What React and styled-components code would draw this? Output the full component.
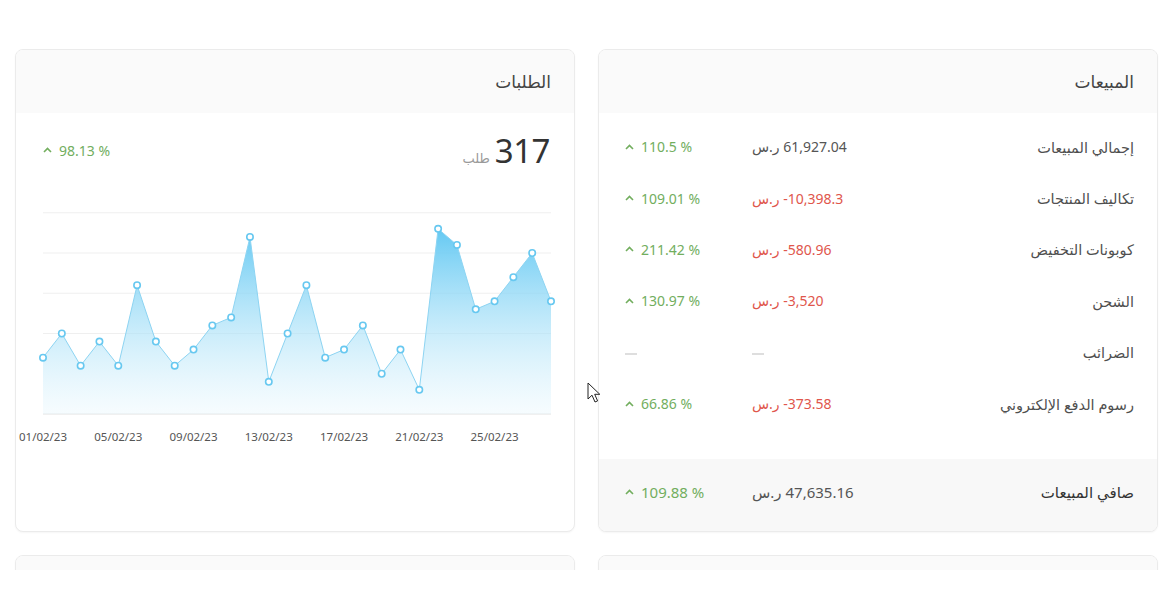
import React from "react";
import styled, { createGlobalStyle } from "styled-components";

const GlobalStyle = createGlobalStyle`
  html, body {
    margin: 0;
    padding: 0;
    background: #ffffff;
  }
  body {
    font-family: "Noto Sans", "DejaVu Sans", sans-serif;
    color: #444;
  }
`;

const GREEN = "#72ae5e";
const RED = "#e0564c";

const Page = styled.div`
  position: relative;
  direction: rtl;
  height: 570px;
  overflow: hidden;
  box-sizing: border-box;
  padding: 49px 12px 0 15px;
  display: grid;
  grid-template-columns: 560px 560px;
  grid-auto-rows: 483px;
  column-gap: 23px;
  row-gap: 23px;
`;

const Card = styled.section`
  display: flex;
  flex-direction: column;
  border: 1px solid #ebebeb;
  border-radius: 8px;
  background: #fff;
  overflow: hidden;
  box-shadow: 0 1px 2px rgba(0, 0, 0, 0.04);
`;

const CardHeader = styled.header`
  height: 63px;
  flex: none;
  display: flex;
  align-items: center;
  padding: 0 23px;
  background: #fafafa;
  font-size: 17px;
  color: #444;
`;

const SalesBody = styled.div`
  flex: 1;
  padding: 8px 23px 30px 26px;
  display: flex;
  flex-direction: column;
`;

const Row = styled.div`
  display: grid;
  grid-template-columns: 1fr 200px 127px;
  align-items: center;
  height: 51.4px;
  font-size: ${(p) => (p.$big ? 15 : 14)}px;
`;

const Label = styled.div`
  font-size: ${(p) => (p.$strong ? 15 : 14.5)}px;
  color: ${(p) => (p.$strong ? "#333" : "#4f4f4f")};
  font-weight: ${(p) => (p.$strong ? 500 : 400)};
`;

const Value = styled.div`
  text-align: left;
  color: ${(p) => (p.$negative ? RED : "#555")};
`;

const Num = styled.span`
  unicode-bidi: isolate;
`;

const Dash = styled.span`
  display: inline-block;
  width: 12px;
  height: 2px;
  background: #dedede;
  vertical-align: middle;
`;

const Change = styled.div`
  direction: ltr;
  display: flex;
  align-items: center;
  gap: 7px;
  color: ${GREEN};
  font-size: ${(p) => p.$size || 14}px;
`;

const SalesFooter = styled.div`
  height: 74px;
  flex: none;
  box-sizing: border-box;
  background: #f8f8f8;
  padding: 0 23px 9px 26px;
  display: flex;
  align-items: center;
  & > div {
    flex: 1;
  }
`;

const OrdersBody = styled.div`
  flex: 1;
  display: flex;
  flex-direction: column;
  padding-top: 17px;
`;

const TotalRow = styled.div`
  height: 40px;
  display: flex;
  align-items: center;
  justify-content: space-between;
  padding: 0 24px 0 27px;
`;

const Total = styled.div`
  display: flex;
  align-items: baseline;
  gap: 5px;
`;

const TotalNumber = styled.span`
  font-size: 33px;
  line-height: 1;
  color: #333;
  font-weight: 400;
  letter-spacing: -0.5px;
`;

const TotalUnit = styled.span`
  font-size: 13px;
  color: #9a9a9a;
`;

const ChartSvg = styled.svg`
  display: block;
  margin-top: 24px;
  direction: ltr;
`;

const AxisLabel = styled.text`
  font-family: "Noto Sans", "DejaVu Sans", sans-serif;
  font-size: 11.5px;
  fill: #555;
`;

const Cursor = styled.svg`
  position: absolute;
  left: 587px;
  top: 382px;
`;

function Chevron() {
  return (
    <svg width="9" height="6" viewBox="0 0 9 6">
      <path d="M1 5 L4.5 1.5 L8 5" fill="none" stroke={GREEN} strokeWidth="1.6" />
    </svg>
  );
}

const rows = [
  { label: "إجمالي المبيعات", value: "61,927.04", change: "110.5 %" },
  { label: "تكاليف المنتجات", value: "-10,398.3", change: "109.01 %", negative: true },
  { label: "كوبونات التخفيض", value: "-580.96", change: "211.42 %", negative: true },
  { label: "الشحن", value: "-3,520", change: "130.97 %", negative: true },
  { label: "الضرائب", empty: true },
  { label: "رسوم الدفع الإلكتروني", value: "-373.58", change: "66.86 %", negative: true },
];

const values = [7, 10, 6, 9, 6, 16, 9, 6, 8, 11, 12, 22, 4, 10, 16, 7, 8, 11, 5, 8, 3, 23, 21, 13, 14, 17, 20, 14];

function OrdersChart() {
  const x0 = 27;
  const step = (535 - 27) / 27;
  const base = 220;
  const unit = 8.05;
  const pts = values.map((v, i) => [x0 + i * step, base - v * unit]);
  const line = pts.map((p, i) => (i ? "L" : "M") + p[0].toFixed(1) + " " + p[1].toFixed(1)).join(" ");
  const area = line + ` L535 ${base} L${x0} ${base} Z`;
  const grid = [0, 10, 15, 20, 25];
  return (
    <ChartSvg width="558" height="262" viewBox="0 0 558 262">
      <defs>
        <linearGradient id="fillBlue" x1="0" y1="0" x2="0" y2="1">
          <stop offset="0%" stopColor="#5cc6f2" stopOpacity="0.95" />
          <stop offset="100%" stopColor="#e6f6fd" stopOpacity="0.35" />
        </linearGradient>
      </defs>
      {grid.map((g) => (
        <line
          key={g}
          x1="27"
          x2="535"
          y1={base - g * unit}
          y2={base - g * unit}
          stroke={g === 0 ? "#e2e2e2" : "#efefef"}
          strokeWidth="1"
        />
      ))}
      <path d={area} fill="url(#fillBlue)" />
      <path d={line} fill="none" stroke="#8dd4f2" strokeWidth="1" />
      {pts.map((p, i) => (
        <circle key={i} cx={p[0]} cy={p[1]} r="3.2" fill="#fff" stroke="#67c8f0" strokeWidth="1.6" />
      ))}
      {pts.map((p, i) =>
        i % 4 === 0 ? (
          <AxisLabel key={"l" + i} x={p[0]} y="247" textAnchor="middle">
            {String(i + 1).padStart(2, "0")}/02/23
          </AxisLabel>
        ) : null
      )}
    </ChartSvg>
  );
}

function SalesCard() {
  return (
    <Card>
      <CardHeader>المبيعات</CardHeader>
      <SalesBody>
        {rows.map((r) => (
          <Row key={r.label}>
            <Label>{r.label}</Label>
            {r.empty ? (
              <>
                <Value>
                  <Dash />
                </Value>
                <Value>
                  <Dash />
                </Value>
              </>
            ) : (
              <>
                <Value $negative={r.negative}>
                  <Num dir="ltr">{r.value}</Num> ر.س
                </Value>
                <Change>
                  <Chevron />
                  {r.change}
                </Change>
              </>
            )}
          </Row>
        ))}
      </SalesBody>
      <SalesFooter>
        <Row $big>
          <Label $strong>صافي المبيعات</Label>
          <Value>
            <Num dir="ltr">47,635.16</Num> ر.س
          </Value>
          <Change $size={15}>
            <Chevron />
            109.88 %
          </Change>
        </Row>
      </SalesFooter>
    </Card>
  );
}

function OrdersCard() {
  return (
    <Card>
      <CardHeader>الطلبات</CardHeader>
      <OrdersBody>
        <TotalRow>
          <Total>
            <TotalNumber>317</TotalNumber>
            <TotalUnit>طلب</TotalUnit>
          </Total>
          <Change>
            <Chevron />
            98.13 %
          </Change>
        </TotalRow>
        <OrdersChart />
      </OrdersBody>
    </Card>
  );
}

export default function App() {
  return (
    <>
      <GlobalStyle />
      <Page>
        <SalesCard />
        <OrdersCard />
        <Card>
          <CardHeader />
        </Card>
        <Card>
          <CardHeader />
        </Card>
        <Cursor width="14" height="22" viewBox="0 0 14 22">
          <path d="M1 1 L1 17 L5 13.2 L8 20 L10.6 18.9 L7.7 12.3 L12.8 12.3 Z" fill="#fff" stroke="#222" strokeWidth="1" strokeLinejoin="round" />
        </Cursor>
      </Page>
    </>
  );
}
